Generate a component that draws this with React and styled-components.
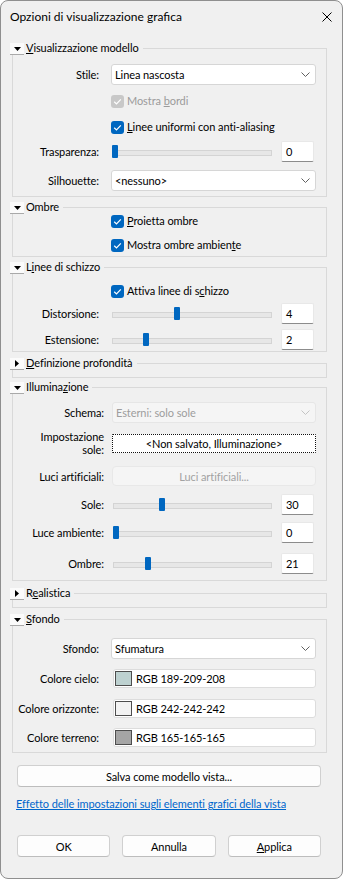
import React from 'react'
import styled, { createGlobalStyle } from 'styled-components'

const GlobalStyle = createGlobalStyle`
  html, body {
    margin: 0;
    padding: 0;
    background: #ffffff;
  }
  body {
    font-family: Lato, "Noto Sans", sans-serif;
    font-size: 11px;
    letter-spacing: -0.08px;
    color: #000;
  }
  * { box-sizing: border-box; }
`

const Window = styled.div`
  width: 343px;
  height: 879px;
  border: 1px solid #8f8f8f;
  border-radius: 8px;
  background: #f0f0f0;
  display: flex;
  flex-direction: column;
  overflow: hidden;
`

const TitleBar = styled.div`
  height: 31px;
  display: flex;
  align-items: center;
  justify-content: space-between;
  padding-left: 9px;
  flex: none;
`

const TitleText = styled.span`
  font-size: 12px;
  letter-spacing: 0;
`

const CloseBtn = styled.span`
  width: 30px;
  height: 31px;
  display: flex;
  align-items: center;
  justify-content: center;
`

const Panel = styled.div`
  padding: 0 15px 0 9px;
  display: flex;
  flex-direction: column;
`

const Group = styled.section`
  margin-top: ${p => p.$top}px;
`

const Header = styled.div`
  display: flex;
  height: 14px;
`

const Toggle = styled.span`
  flex: none;
  width: 14px;
  height: 12px;
  margin-top: 2px;
  display: flex;
  align-items: center;
  justify-content: center;
  background: #fbfbfb;
  border-bottom: 1px solid #a9a9a9;
`

const HeadTitle = styled.span`
  padding: 0 4px 0 2px;
  line-height: 14px;
  white-space: nowrap;
`

const HeadLine = styled.span`
  flex: 1;
  margin-top: 7px;
  border-top: 1px solid #d9d9d9;
  border-right: 1px solid #d9d9d9;
`

const Box = styled.div`
  --lw: ${p => p.$lw || 86}px;
  --gap: ${p => p.$gap || 12}px;
  margin-left: 2px;
  border: 1px solid #d9d9d9;
  border-top: none;
  padding-bottom: ${p => p.$pb || 0}px;
  display: flex;
  flex-direction: column;
`

const Row = styled.div`
  display: grid;
  grid-template-columns: var(--lw) 1fr;
  column-gap: var(--gap);
  align-items: center;
  margin-top: ${p => p.$top || 0}px;
  padding-right: 10px;
`

const Label = styled.div`
  text-align: right;
  line-height: 13px;
  white-space: nowrap;
`

const CheckLine = styled.div`
  grid-column: 2;
  display: flex;
  align-items: center;
  gap: 3px;
  height: 14px;
  line-height: 14px;
  color: ${p => (p.$disabled ? '#9b9b9b' : '#000')};
`

const CheckBox = styled.span`
  flex: none;
  width: 13px;
  height: 13px;
  border-radius: 3px;
  background: ${p => (p.$disabled ? '#c8c8c8' : '#0067c0')};
  display: flex;
  align-items: center;
  justify-content: center;
`

const ComboBox = styled.div`
  height: 21px;
  display: flex;
  align-items: center;
  justify-content: space-between;
  padding: 0 5px 0 3px;
  background: ${p => (p.$disabled ? '#f5f5f5' : '#fff')};
  border: 1px solid ${p => (p.$disabled ? '#e6e6e6' : '#d6d6d6')};
  border-radius: 3px;
  color: ${p => (p.$disabled ? '#9d9d9d' : '#000')};
`

const SliderWrap = styled.div`
  display: flex;
  align-items: center;
  gap: 9px;
`

const Track = styled.div`
  position: relative;
  flex: 1;
  height: 13px;
  margin-left: 1px;

  &::before {
    content: '';
    position: absolute;
    left: 0;
    right: 0;
    top: 5px;
    height: 4px;
    background: #e7e7e7;
    border: 1px solid #d4d4d4;
  }
`

const Thumb = styled.span`
  position: absolute;
  top: 0;
  width: 6px;
  height: 13px;
  border-radius: 1px;
  background: #0067c0;
`

const NumBox = styled.div`
  width: 33px;
  height: 21px;
  margin-right: 2px;
  padding-left: 4px;
  line-height: 19px;
  background: #fff;
  border: 1px solid #e8e8e8;
  border-bottom-color: #8c8c8c;
  border-radius: 2px;
`

const Button = styled.div`
  height: ${p => p.$h || 22}px;
  display: flex;
  align-items: center;
  justify-content: center;
  background: #fdfdfd;
  border: 1px solid #d0d0d0;
  border-bottom-color: #bdbdbd;
  border-radius: 4px;
  white-space: nowrap;
`

const FocusButton = styled(Button)`
  background: #fff;
  border: 1px dotted #111;
  border-radius: 1px;
`

const DisabledButton = styled(Button)`
  background: #f5f5f5;
  border-color: #e8e8e8;
  color: #a2a2a2;
`

const ColorField = styled.div`
  height: 19px;
  margin-left: 2px;
  display: flex;
  align-items: center;
  gap: 4px;
  padding-left: 1px;
  background: #fff;
  border: 1px solid #dcdcdc;
  border-radius: 3px;
`

const Swatch = styled.span`
  width: 17px;
  height: 15px;
  border: 1px solid #4d4d4d;
  background: ${p => p.$color};
`

const Footer = styled.div`
  padding: 0 21px 0 16px;
  display: flex;
  flex-direction: column;
`

const LinkText = styled.a`
  margin-top: 10px;
  margin-left: -1px;
  line-height: 14px;
  color: #0066cc;
  text-decoration: underline;
`

const ButtonRow = styled.div`
  margin-top: 24px;
  display: grid;
  grid-template-columns: repeat(3, 1fr);
  gap: 12px;
`

const Chevron = ({ color = '#606060' }) => (
  <svg width="9" height="5" viewBox="0 0 9 5">
    <path d="M0.5 0.5 L4.5 4.5 L8.5 0.5" fill="none" stroke={color} strokeWidth="1" />
  </svg>
)

const Tick = () => (
  <svg width="13" height="13" viewBox="0 0 13 13">
    <path d="M3.2 6.8 L5.5 9 L9.8 4.3" fill="none" stroke="#fff" strokeWidth="1.2" />
  </svg>
)

const Combo = ({ value, disabled }) => (
  <ComboBox $disabled={disabled}>
    <span>{value}</span>
    <Chevron color={disabled ? '#c4c4c4' : '#606060'} />
  </ComboBox>
)

const Check = ({ children, disabled }) => (
  <CheckLine $disabled={disabled}>
    <CheckBox $disabled={disabled}><Tick /></CheckBox>
    <span>{children}</span>
  </CheckLine>
)

const Slider = ({ value, max }) => (
  <SliderWrap>
    <Track>
      <Thumb style={{ left: `calc((100% - 6px) * ${value / max})` }} />
    </Track>
    <NumBox>{value}</NumBox>
  </SliderWrap>
)

const Section = ({ title, open = true, top, children, ...box }) => (
  <Group $top={top}>
    <Header>
      <Toggle>
        {open ? (
          <svg width="7" height="4" viewBox="0 0 7 4"><polygon points="0,0 7,0 3.5,4" fill="#000" /></svg>
        ) : (
          <svg width="4" height="7" viewBox="0 0 4 7"><polygon points="0,0 4,3.5 0,7" fill="#000" /></svg>
        )}
      </Toggle>
      <HeadTitle>{title}</HeadTitle>
      <HeadLine />
    </Header>
    <Box {...box}>{children}</Box>
  </Group>
)

const App = () => {
  return (
    <Window>
      <GlobalStyle />
      <TitleBar>
        <TitleText>Opzioni di visualizzazione grafica</TitleText>
        <CloseBtn>
          <svg width="10" height="10" viewBox="0 0 10 10">
            <path d="M0.5 0.5 L9.5 9.5 M9.5 0.5 L0.5 9.5" stroke="#000" strokeWidth="1" />
          </svg>
        </CloseBtn>
      </TitleBar>

      <Panel>
        <Section top={9} title={<><u>V</u>isualizzazione modello</>} $pb={5}>
          <Row $top={9}>
            <Label>Stile:</Label>
            <Combo value="Linea nascosta" />
          </Row>
          <Row $top={9}>
            <Check disabled>Mostra <u>b</u>ordi</Check>
          </Row>
          <Row $top={12}>
            <Check><u>L</u>inee uniformi con anti-aliasing</Check>
          </Row>
          <Row $top={7}>
            <Label>Trasparenza:</Label>
            <Slider value={0} max={100} />
          </Row>
          <Row $top={8}>
            <Label>Silhouette:</Label>
            <Combo value="<nessuno>" />
          </Row>
        </Section>

        <Section top={3} title="Ombre" $pb={4}>
          <Row>
            <Check><u>P</u>roietta ombre</Check>
          </Row>
          <Row $top={10}>
            <Check>Mostra ombre ambien<u>t</u>e</Check>
          </Row>
        </Section>

        <Section top={3} title={<>L<u>i</u>nee di schizzo</>} $pb={1}>
          <Row $top={10}>
            <Check>Attiva linee di s<u>c</u>hizzo</Check>
          </Row>
          <Row $top={5}>
            <Label>Distorsione:</Label>
            <Slider value={4} max={10} />
          </Row>
          <Row $top={5}>
            <Label>Estensione:</Label>
            <Slider value={2} max={10} />
          </Row>
        </Section>

        <Section top={4} open={false} title={<><u>D</u>efinizione profondità</>} $pb={7} />

        <Section top={2} title={<>Illumina<u>z</u>ione</>} $lw={91} $gap={8} $pb={6}>
          <Row $top={8}>
            <Label>Schema:</Label>
            <Combo value="Esterni: solo sole" disabled />
          </Row>
          <Row $top={7}>
            <Label>Impostazione<br />sole:</Label>
            <FocusButton $h={19}>&lt;Non salvato, Illuminazione&gt;</FocusButton>
          </Row>
          <Row $top={10}>
            <Label>Luci artificiali:</Label>
            <DisabledButton $h={20}>Luci artificiali...</DisabledButton>
          </Row>
          <Row $top={8}>
            <Label>Sole:</Label>
            <Slider value={30} max={100} />
          </Row>
          <Row $top={7}>
            <Label>Luce ambiente:</Label>
            <Slider value={0} max={100} />
          </Row>
          <Row $top={10}>
            <Label>Ombre:</Label>
            <Slider value={21} max={100} />
          </Row>
        </Section>

        <Section top={5} open={false} title={<>R<u>e</u>alistica</>} $pb={7} />

        <Section top={4} title={<><u>S</u>fondo</>} $pb={5}>
          <Row $top={12}>
            <Label>Sfondo:</Label>
            <Combo value="Sfumatura" />
          </Row>
          <Row $top={10}>
            <Label>Colore cielo:</Label>
            <ColorField><Swatch $color="rgb(189,209,208)" />RGB 189-209-208</ColorField>
          </Row>
          <Row $top={11}>
            <Label>Colore orizzonte:</Label>
            <ColorField><Swatch $color="rgb(242,242,242)" />RGB 242-242-242</ColorField>
          </Row>
          <Row $top={10}>
            <Label>Colore terreno:</Label>
            <ColorField><Swatch $color="rgb(165,165,165)" />RGB 165-165-165</ColorField>
          </Row>
        </Section>
      </Panel>

      <Footer>
        <Button style={{ marginTop: 12 }}>Salva come modello vista...</Button>
        <LinkText>Effetto delle impostazioni sugli elementi grafici della vista</LinkText>
        <ButtonRow>
          <Button>OK</Button>
          <Button>Annulla</Button>
          <Button><span><u>A</u>pplica</span></Button>
        </ButtonRow>
      </Footer>
    </Window>
  )
}

export default App
